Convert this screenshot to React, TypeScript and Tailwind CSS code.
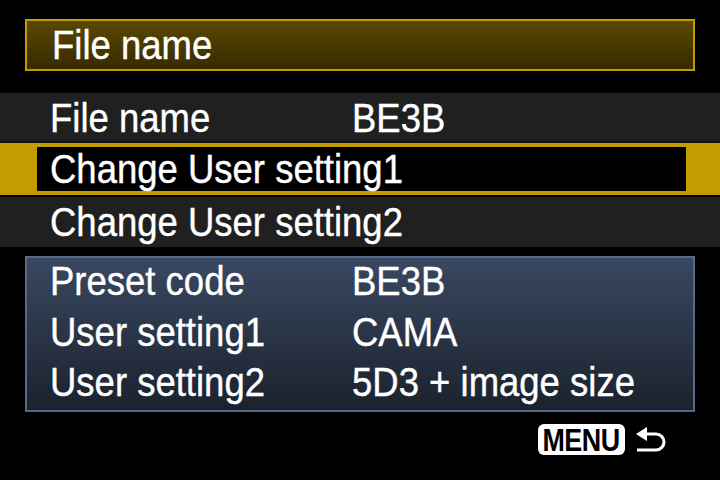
const rows = [
  { label: "Preset code", value: "BE3B" },
  { label: "User setting1", value: "CAMA" },
  { label: "User setting2", value: "5D3 + image size" },
];

function Txt({ children }: { children: React.ReactNode }) {
  return (
    <span className="inline-block origin-left scale-x-[0.89] whitespace-nowrap [-webkit-text-stroke:0.4px_white]">
      {children}
    </span>
  );
}

function ReturnArrow() {
  return (
    <svg width="31" height="25" viewBox="0 0 31 25" fill="none">
      <polygon points="0,7 11,0 11,14" fill="white" />
      <path d="M10 7 H20 A8 8 0 0 1 20 23 H1" stroke="white" strokeWidth="3" />
    </svg>
  );
}

export default function App() {
  return (
    <div
      className="w-[720px] h-[480px] bg-black text-white flex flex-col text-[41px] leading-[39px]"
      style={{ fontFamily: '"Liberation Sans", Arial, sans-serif' }}
    >
      <div className="mt-[19px] mx-[25px] h-[52px] border-2 border-[#c09a00] bg-gradient-to-b from-[#5a4800] to-[#382b00] flex items-center pl-[25px] pt-[1px]">
        <Txt>File name</Txt>
      </div>

      <div className="mt-[22px] flex flex-col">
        <div className="h-[48px] bg-[#202020] flex items-center pl-[50px] pt-[2px]">
          <div className="w-[302px]"><Txt>File name</Txt></div>
          <Txt>BE3B</Txt>
        </div>
        <div className="h-[2px] bg-[#111]" />
        <div className="h-[52px] bg-[#c39c00] flex items-center pl-[37px] pr-[34px]">
          <div className="h-[44px] flex-1 bg-black flex items-center pl-[13px]">
            <Txt>Change User setting1</Txt>
          </div>
        </div>
        <div className="h-[2px] bg-black" />
        <div className="h-[50px] bg-[#202020] flex items-center pl-[50px]">
          <Txt>Change User setting2</Txt>
        </div>
      </div>

      <div className="mt-[9px] mx-[25px] h-[156px] border-2 border-[#56698a] bg-gradient-to-b from-[#394861] to-[#1b222e] flex flex-col pl-[23px]">
        {rows.map((r) => (
          <div key={r.label} className="h-[51px] leading-[47px] flex">
            <div className="w-[302px]"><Txt>{r.label}</Txt></div>
            <Txt>{r.value}</Txt>
          </div>
        ))}
      </div>

      <div className="mt-[12px] flex justify-end items-center gap-[11px] pr-[53px]">
        <div className="w-[87px] h-[31px] bg-white rounded-[6px] flex items-center justify-center text-black font-bold text-[32px] leading-none">
          <span className="inline-block scale-x-[0.84] tracking-[-0.5px]">MENU</span>
        </div>
        <ReturnArrow />
      </div>
    </div>
  );
}
